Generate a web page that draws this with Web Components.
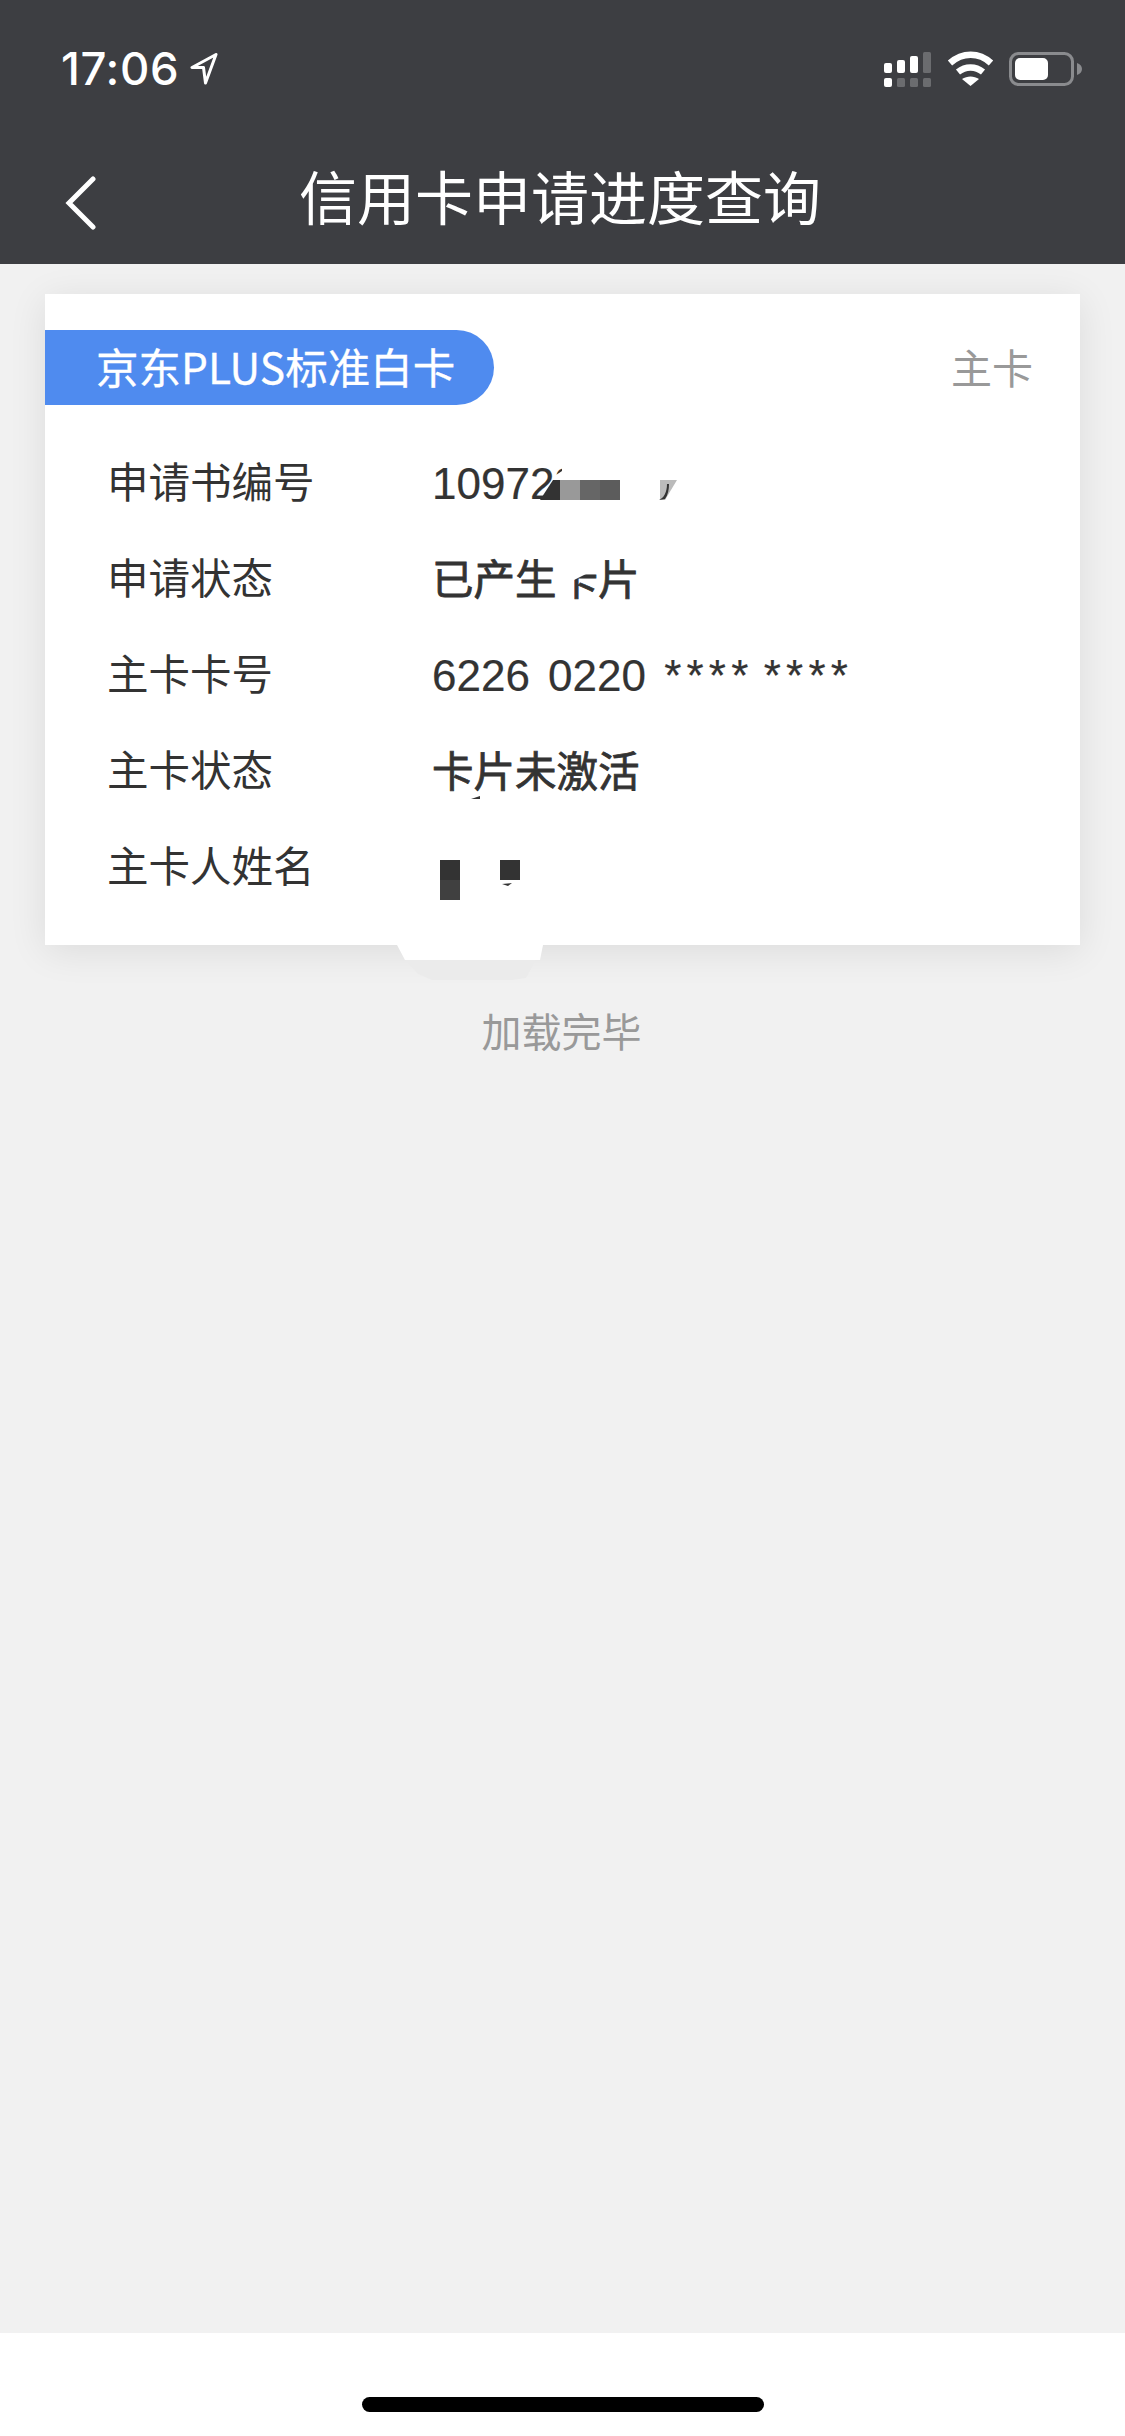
<!DOCTYPE html>
<html lang="zh-CN">
<head>
<meta charset="utf-8">
<title>信用卡申请进度查询</title>
<style>
html,body{margin:0;padding:0;background:#f1f1f1}
body{width:1125px;height:2436px;overflow:hidden;font-family:"Noto Sans CJK SC","Liberation Sans",sans-serif}
</style>
</head>
<body>
<app-page>
  <app-header title-text="信用卡申请进度查询"></app-header>
  <info-card slot="main" name="京东PLUS标准白卡" kind="主卡">
    <info-row label="申请书编号" value="109728" numeric></info-row>
    <info-row label="申请状态" value="已产生卡片" strong></info-row>
    <info-row label="主卡卡号" value="6226 0220 **** ****" numeric></info-row>
    <info-row label="主卡状态" value="卡片未激活" strong></info-row>
    <info-row label="主卡人姓名" value=""></info-row>
  </info-card>
  <load-note slot="main">加载完毕</load-note>
  <home-bar slot="foot"></home-bar>
</app-page>
<script>
const cjk='"Noto Sans CJK SC","Liberation Sans",sans-serif';
class AppPage extends HTMLElement{constructor(){super();this.attachShadow({mode:'open'}).innerHTML=`
<style>
:host{display:flex;flex-direction:column;width:1125px;height:2436px;background:#f1f1f1}
main{flex:1;display:flex;flex-direction:column;min-height:0}
</style>
<slot></slot><main><slot name="main"></slot></main><slot name="foot"></slot>`}}
class AppHeader extends HTMLElement{constructor(){super();this.attachShadow({mode:'open'}).innerHTML=`
<style>
:host{display:block;height:264px;background:#3d3e42;color:#fff}
.status{height:132px;display:flex;align-items:flex-start;justify-content:space-between;box-sizing:border-box;padding:42px 43px 0 61px}
.left{display:flex;align-items:center;gap:11px;height:54px}
.time{font:500 45.500px/54px Inter,"Liberation Sans",sans-serif;letter-spacing:.6px}
svg{display:block}
.icons{margin-top:9px}
.nav{height:132px;display:grid;grid-template-columns:299px auto 1fr;align-items:center}
.back{padding:9px 0 0 65px}
.title{font:400 58px/1 ${cjk};letter-spacing:0;white-space:nowrap;padding-bottom:6px}
</style>
<div class="status">
  <div class="left"><span class="time">17:06</span>
    <svg width="28" height="32" viewBox="0 0 28 32"><path d="M26 1.5 2 14.5h11.5L15.5 30z" fill="none" stroke="#fff" stroke-width="3" stroke-linejoin="round"/></svg>
  </div>
  <svg class="icons" width="198" height="36" viewBox="884 51 198 36">
    <g fill="#fff"><rect x="884" y="63" width="8" height="10" rx="2"/><rect x="897" y="60" width="8" height="13" rx="2"/><rect x="910" y="56" width="8" height="17" rx="2"/><rect x="884" y="78" width="8" height="9" rx="2"/></g>
    <g fill="#6b6c6f"><rect x="923" y="52" width="8" height="21" rx="1.5"/><rect x="897" y="78" width="8" height="9" rx="1.5"/><rect x="910" y="78" width="8" height="9" rx="1.5"/><rect x="923" y="78" width="8" height="9" rx="1.5"/></g>
    <g fill="none" stroke="#fff" stroke-width="6.5"><path d="M950 63c12.500-11 29-11 41 0"/><path d="M958 72c7.500-6 17.500-6 25 0"/></g>
    <path d="M962 79c5-3.500 12-3.500 17 0l-8.500 7z" fill="#fff"/>
    <rect x="1010.500" y="53.500" width="62" height="31" rx="8" fill="none" stroke="#8a8b8e" stroke-width="3"/>
    <rect x="1015" y="58" width="33" height="22" rx="5" fill="#fff"/>
    <path d="M1077 63c3 1 5 3 5 6s-2 5-5 6z" fill="#8a8b8e"/>
  </svg>
</div>
<div class="nav">
  <div class="back"><svg width="32" height="54" viewBox="0 0 32 54"><path d="M28 3 4 27l24 24" fill="none" stroke="#fff" stroke-width="5" stroke-linecap="round" stroke-linejoin="miter"/></svg></div>
  <div class="title"></div><div></div>
</div>`;
this.shadowRoot.querySelector('.title').textContent=this.getAttribute('title-text')}}
class InfoCard extends HTMLElement{constructor(){super();this.attachShadow({mode:'open'}).innerHTML=`
<style>
:host{display:block;position:relative;margin:30px 45px 0;background:#fff;box-shadow:0 6px 36px rgba(0,0,0,.09);padding:36px 0 30px}
.top{display:flex;align-items:center;justify-content:space-between;height:75px;padding-right:47px;margin-bottom:30px}
.badge{height:75px;width:449px;box-sizing:border-box;background:#4f8bef;color:#fff;border-radius:0 37.500px 37.500px 0;font:400 42.500px/72px ${cjk};padding-left:51px;white-space:nowrap;-webkit-text-stroke:.3px #fff}
.kind{font:400 41px/1 ${cjk};color:#999;padding-bottom:3px}
.mask{position:absolute;left:0;top:0;overflow:visible;pointer-events:none}
</style>
<div class="top"><div class="badge"></div><div class="kind"></div></div>
<slot></slot>
<svg class="mask" width="1035" height="651" viewBox="45 294 1035 651">
  <polygon points="397,945 543,945 540,960 405,960" fill="#fff"/>
  <polygon points="405,960 536,960 526,978 512,980 432,980 418,974" fill="#ebebeb"/>
  <polygon points="562,460 622,460 622,480 553,480 553,477 562,471" fill="#fff"/>
  <rect x="553" y="500" width="40" height="10" fill="#fff"/>
  <polygon points="540,500 553,480 560,480 560,500" fill="#333"/>
  <rect x="560" y="480" width="20" height="20" fill="#999"/>
  <rect x="580" y="480" width="20" height="20" fill="#666"/>
  <rect x="600" y="480" width="20" height="20" fill="#5c5c5c"/>
  <polygon points="660,480 677,480 665,500 660,500" fill="#bbb"/>
  <path d="M667 484c0 8-3 14-8 16l6-1c3-4 4-10 4-15z" fill="#333"/>
  <polygon points="556,552 600,552 600,571 590,572 574,580 574,602 556,602" fill="#fff"/>
  <rect x="440" y="860" width="20" height="20" fill="#333"/>
  <rect x="440" y="880" width="20" height="20" fill="#404040"/>
  <rect x="500" y="860" width="20" height="20" fill="#333"/>
  <path d="M502 884l10-1-4 3z" fill="#333"/>
  <path d="M471 799l9-3v3z" fill="#333"/>
</svg>`;
const s=this.shadowRoot;s.querySelector('.badge').textContent=this.getAttribute('name');s.querySelector('.kind').textContent=this.getAttribute('kind')}}
class InfoRow extends HTMLElement{constructor(){super();this.attachShadow({mode:'open'}).innerHTML=`
<style>
:host{display:grid;grid-template-columns:325px 1fr;height:96px;align-items:center;padding-left:62px;color:#333}
.l{font:400 41.500px/1 ${cjk};white-space:nowrap;padding-bottom:5px}
.v{font:400 41.500px/1 ${cjk};white-space:pre;padding-bottom:2px;-webkit-text-stroke:.8px #333}
:host([numeric]) .v{font:400 44px/1 "Liberation Sans",sans-serif;-webkit-text-stroke:.2px #333;padding:2px 0 0;word-spacing:6px}
.stars{letter-spacing:5.200px;margin-right:-8px}
</style><div class="l"></div><div class="v"></div>`;
const s=this.shadowRoot;s.querySelector('.l').textContent=this.getAttribute('label');
const v=s.querySelector('.v');
(this.getAttribute('value')||'').split(/(\*+)/).forEach(p=>{if(!p)return;
  if(p[0]==='*'){const e=document.createElement('span');e.className='stars';e.textContent=p;v.append(e)}
  else v.append(p)})}}
class LoadNote extends HTMLElement{constructor(){super();this.attachShadow({mode:'open'}).innerHTML=`
<style>:host{display:block;margin-top:63px;text-align:center;font:400 40px/44px ${cjk};color:#999;padding-right:2px}</style><slot></slot>`}}
class HomeBar extends HTMLElement{constructor(){super();this.attachShadow({mode:'open'}).innerHTML=`
<style>:host{display:flex;justify-content:center;height:103px;box-sizing:border-box;padding-top:64px;background:#fff}
i{display:block;width:402px;height:15px;border-radius:8px;background:#000}</style><i></i>`}}
customElements.define('app-page',AppPage);
customElements.define('app-header',AppHeader);
customElements.define('info-card',InfoCard);
customElements.define('info-row',InfoRow);
customElements.define('load-note',LoadNote);
customElements.define('home-bar',HomeBar);
</script>
</body>
</html>
